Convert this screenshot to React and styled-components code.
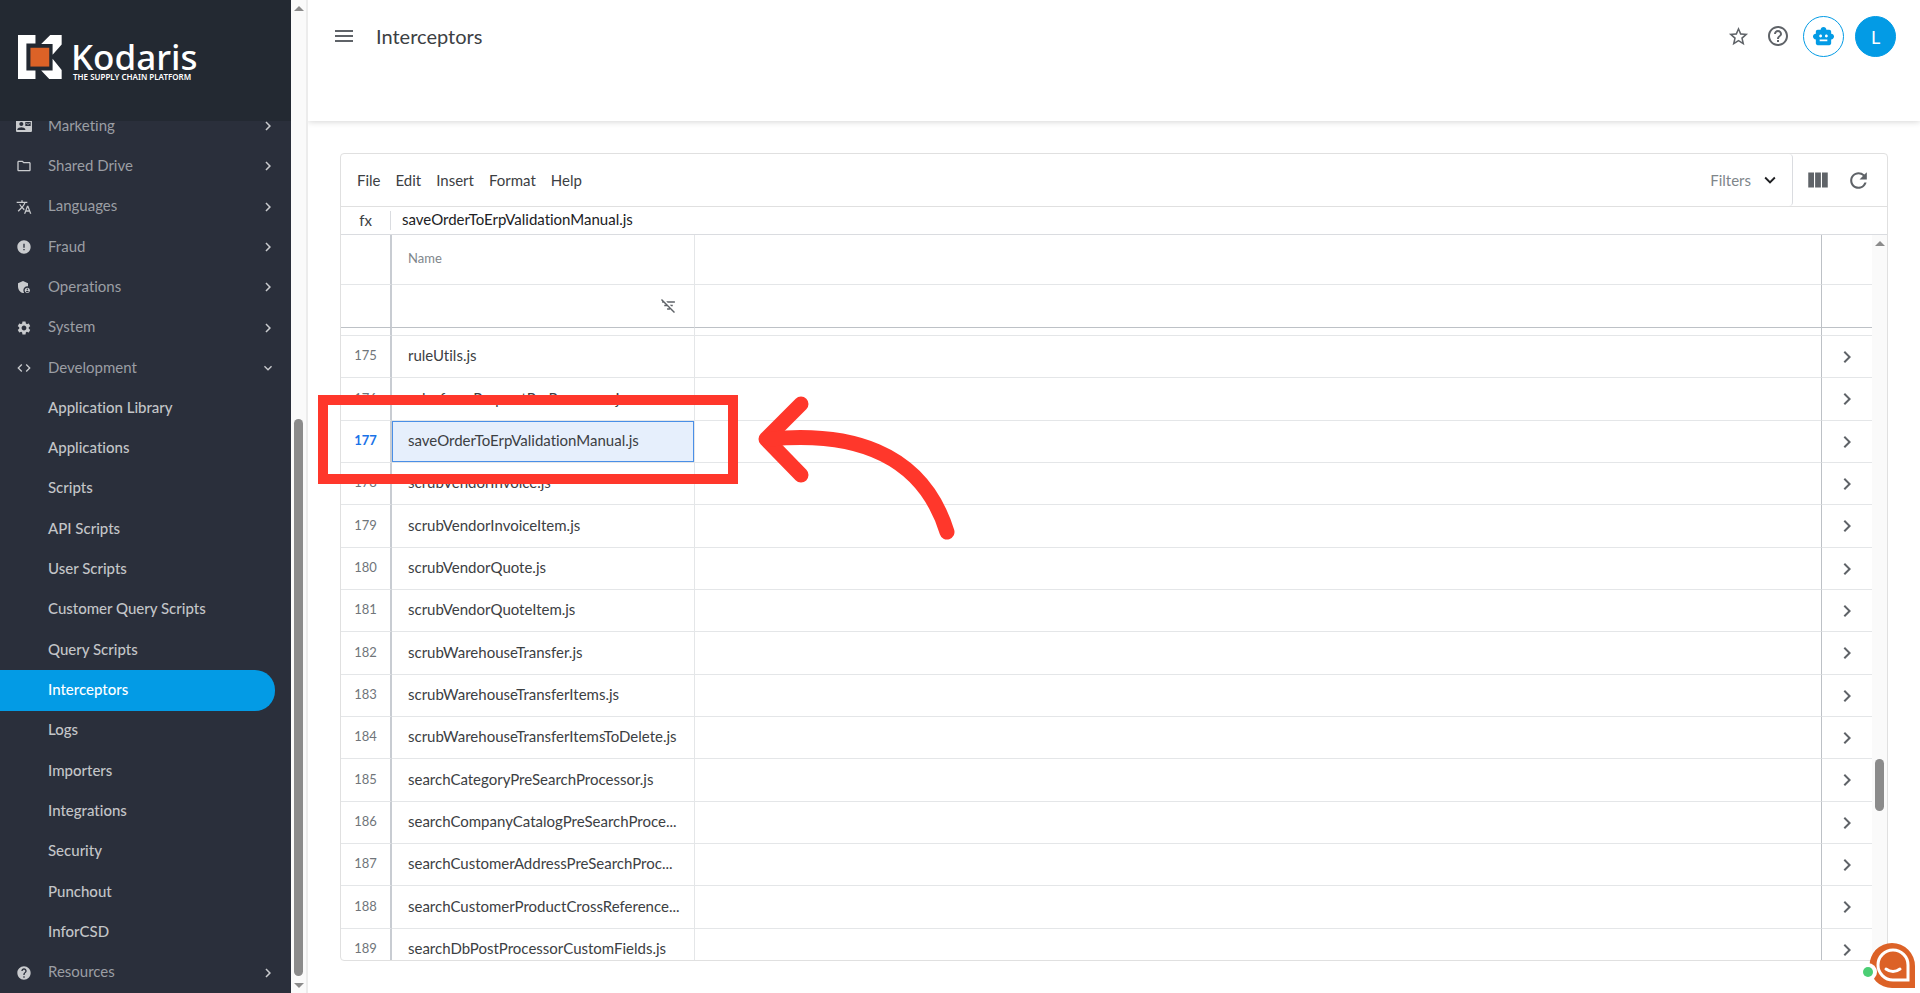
import React from "react";
import styled, { createGlobalStyle } from "styled-components";
import {
	MdAdminPanelSettings,
	MdCode,
	MdContactMail,
	MdError,
	MdExpandMore,
	MdChevronRight,
	MdFilterListOff,
	MdHelp,
	MdHelpOutline,
	MdMenu,
	MdOutlineFolder,
	MdRefresh,
	MdSettings,
	MdSmartToy,
	MdStarBorder,
	MdTranslate,
	MdViewColumn,
} from "react-icons/md";

const GlobalStyle = createGlobalStyle`
	* {
		box-sizing: border-box;
	}
	body {
		margin: 0;
		font-family: Lato, "Open Sans", sans-serif;
		font-size: 15px;
		font-variant-ligatures: none;
		color: #3c4043;
		background: #fff;
	}
	button, input {
		font: inherit;
		color: inherit;
		padding: 0;
		border: 0;
		background: none;
		font-variant-ligatures: none;
	}
	button {
		cursor: pointer;
	}
	a {
		text-decoration: none;
	}
`;

const Page = styled.div`
	display: flex;
	height: 100vh;
	overflow: hidden;
`;

/* sidebar */

const Sidebar = styled.aside`
	display: flex;
	flex-direction: column;
	flex: none;
	width: 291px;
	background: #2a2f3b;
`;

const Brand = styled.a`
	display: flex;
	flex: none;
	gap: 9px;
	height: 121px;
	padding: 35px 18px 0;
	background: #232932;
	color: #fff;
	font-family: "Noto Sans", sans-serif;
	z-index: 1;
`;

const BrandText = styled.div`
	padding-top: 6px;
`;

const BrandName = styled.div`
	font-size: 35px;
	line-height: 32px;
	font-weight: 500;
`;

const Tagline = styled.div`
	padding-left: 2px;
	font-size: 8px;
	line-height: 8px;
	font-weight: 600;
	white-space: nowrap;
`;

const NavList = styled.ul`
	display: flex;
	flex-direction: column;
	flex: 1;
	margin: -15px 0 0;
	padding: 0;
	list-style: none;
`;

const NavItem = styled.li`
	display: flex;
	flex: 1 0 40px;
`;

const Group = styled.button`
	display: grid;
	grid-template-columns: 48px 1fr 46px;
	align-items: center;
	width: 100%;
	text-align: left;
	color: #9b9ea4;

	span {
		padding-bottom: 3px;
	}
	svg {
		justify-self: center;
		color: #c9cbce;
	}
`;

const SubLink = styled.a`
	display: flex;
	align-items: center;
	width: 275px;
	padding: 0 0 3px 48px;
	border-radius: 0 20px 20px 0;
	font-weight: 500;
	color: ${({ $active }) => ($active ? "#fff" : "#c3c5c8")};
	background: ${({ $active }) => ($active ? "#039be5" : "transparent")};
`;

/* scrollbars */

const Track = styled.div`
	display: flex;
	flex-direction: column;
	align-items: center;
	flex: none;
	width: 15px;
	background: #fafafa;
`;

const Arrow = styled.div`
	flex: none;
	margin: 6px 0 5px;
	border: 5px solid transparent;
	border-top-width: ${({ $down }) => ($down ? "5px" : "0")};
	border-bottom-width: ${({ $down }) => ($down ? "0" : "5px")};
	border-top-color: #8b8b8b;
	border-bottom-color: #8b8b8b;
`;

const Gap = styled.div`
	flex: ${({ $size }) => $size};
`;

const Thumb = styled.div`
	flex: ${({ $size }) => $size};
	width: 9px;
	border-radius: 5px;
	background: #8b8b8b;
`;

/* main column */

const Main = styled.main`
	display: flex;
	flex-direction: column;
	flex: 1;
	min-width: 0;
	border-left: 2px solid #ececec;
`;

const Header = styled.header`
	display: flex;
	align-items: flex-start;
	flex: none;
	height: 121px;
	padding: 16px 24px 0 16px;
	box-shadow: 0 1px 6px rgba(0, 0, 0, 0.16);
	clip-path: inset(0 0 -10px 0);
`;

const IconButton = styled.button`
	display: flex;
	align-items: center;
	justify-content: center;
	width: 40px;
	height: 40px;
	color: #5f6368;
`;

const Title = styled.h1`
	flex: 1;
	margin: 0 0 0 12px;
	font-size: 20px;
	line-height: 40px;
	font-weight: 400;
`;

const Round = styled(IconButton)`
	width: 41px;
	height: 41px;
	margin-left: ${({ $filled }) => ($filled ? "11px" : "5px")};
	border: 1px solid #039be5;
	border-radius: 50%;
	font-size: 18px;
	color: ${({ $filled }) => ($filled ? "#fff" : "#039be5")};
	background: ${({ $filled }) => ($filled ? "#039be5" : "#fff")};
`;

const Content = styled.section`
	display: flex;
	flex: 1;
	min-height: 0;
	padding: 32px;
`;

const Sheet = styled.div`
	display: flex;
	flex-direction: column;
	flex: 1;
	min-width: 0;
	border: 1px solid #e0e0e0;
	border-radius: 4px;
	overflow: hidden;
`;

const Toolbar = styled.div`
	display: flex;
	flex: none;
	height: 53px;
	border-bottom: 1px solid #e0e0e0;
`;

const Menu = styled.nav`
	display: flex;
	align-items: center;
	flex: 1;
	gap: 15px;
	padding-left: 16px;
`;

const Filters = styled.button`
	display: flex;
	align-items: center;
	gap: 8px;
	padding: 0 11px;
	border-right: 1px solid #dadce0;
	border-radius: 4px;
	color: #80868b;

	svg {
		color: #202124;
	}
`;

const Tools = styled.div`
	display: flex;
	align-items: center;
	padding: 0 9px 0 5px;
`;

const FormulaBar = styled.label`
	display: flex;
	align-items: center;
	flex: none;
	height: 28px;
	border-bottom: 1px solid #dadce0;
`;

const Fx = styled.span`
	width: 50px;
	text-align: center;
	line-height: 19px;
	border-right: 1px solid #dadce0;
`;

const FormulaInput = styled.input`
	flex: 1;
	padding: 0 0 3px 11px;
	color: #202124;
`;

const GridArea = styled.div`
	display: flex;
	flex: 1;
	min-height: 0;
`;

const Viewport = styled.div`
	flex: 1;
	min-width: 0;
	overflow: hidden;
`;

const Table = styled.table`
	width: 100%;
	table-layout: fixed;
	border-spacing: 0;

	th, td {
		padding: 0;
		font-weight: 400;
		border-bottom: 1px solid #e4e6e8;
	}
	th:first-child {
		width: 51px;
		border-right: 2px solid #c8ccd2;
	}
	th:nth-child(2), td:nth-child(2) {
		width: 303px;
		border-right: 1px solid #e4e6e8;
	}
	th:nth-child(3), td:nth-child(3) {
		border-right: 1px solid #bdc1c6;
	}
	th:last-child, td:last-child {
		width: 50px;
	}
`;

const HeadRow = styled.tr`
	height: 50px;

	th {
		padding: 0 0 4px 16px;
		text-align: left;
		font-size: 13px;
		color: #80868b;
	}
`;

const FilterRow = styled.tr`
	height: 43px;

	&& th, && td {
		padding-bottom: 2px;
		border-bottom-color: #bdc1c6;
	}
`;

const FilterCell = styled.div`
	display: flex;
	align-items: center;
	padding: 0 17px 0 16px;

	input {
		flex: 1;
		min-width: 0;
	}
	button {
		display: flex;
		color: #5f6368;
	}
`;

const Spacer = styled.tr`
	height: 8px;
`;

const Row = styled.tr`
	height: 42px;

	&:nth-child(3n) {
		height: 43px;
	}
	th {
		padding-bottom: 3px;
		font-size: 13px;
		font-weight: ${({ $selected }) => ($selected ? 700 : 400)};
		color: ${({ $selected }) => ($selected ? "#1a73e8" : "#70757a")};
	}
`;

const NameCell = styled.td`
	&& {
		padding: 0 8px 3px 16px;
		background: ${({ $selected }) => ($selected ? "#e6effc" : "#fff")};
		box-shadow: ${({ $selected }) =>
			$selected ? "0 0 0 1px #4a8fe7 inset" : "none"};
		overflow: hidden;
		text-overflow: ellipsis;
		white-space: nowrap;
	}
`;

const OpenButton = styled.button`
	display: flex;
	width: 100%;
	justify-content: center;
	color: #5f6368;
`;

/* things floating over the page */

const Highlight = styled.div`
	position: absolute;
	left: 318px;
	top: 395px;
	width: 420px;
	height: 89px;
	border: 10px solid #ff372b;
	pointer-events: none;
`;

const Pointer = styled.svg`
	position: absolute;
	left: 750px;
	top: 385px;
	pointer-events: none;
`;

const ChatButton = styled.button`
	position: fixed;
	right: 5px;
	bottom: 4px;
	width: 56px;
	height: 47px;
`;

const groups = [
	{ label: "Marketing", icon: MdContactMail },
	{ label: "Shared Drive", icon: MdOutlineFolder },
	{ label: "Languages", icon: MdTranslate },
	{ label: "Fraud", icon: MdError },
	{ label: "Operations", icon: MdAdminPanelSettings },
	{ label: "System", icon: MdSettings },
	{
		label: "Development",
		icon: MdCode,
		children: [
			"Application Library",
			"Applications",
			"Scripts",
			"API Scripts",
			"User Scripts",
			"Customer Query Scripts",
			"Query Scripts",
			"Interceptors",
			"Logs",
			"Importers",
			"Integrations",
			"Security",
			"Punchout",
			"InforCSD",
		],
	},
	{ label: "Resources", icon: MdHelp },
];

const files = [
	"ruleUtils.js",
	"salesforceRequestPreProcessor.js",
	"saveOrderToErpValidationManual.js",
	"scrubVendorInvoice.js",
	"scrubVendorInvoiceItem.js",
	"scrubVendorQuote.js",
	"scrubVendorQuoteItem.js",
	"scrubWarehouseTransfer.js",
	"scrubWarehouseTransferItems.js",
	"scrubWarehouseTransferItemsToDelete.js",
	"searchCategoryPreSearchProcessor.js",
	"searchCompanyCatalogPreSearchProce...",
	"searchCustomerAddressPreSearchProc...",
	"searchCustomerProductCrossReference...",
	"searchDbPostProcessorCustomFields.js",
];
const firstRow = 175;
const selectedFile = "saveOrderToErpValidationManual.js";

const Logo = () => (
	<svg width='44' height='44' viewBox='0 0 131 131' fill='#fff'>
		<path d='M0 0H52V25H25V106H52V131H0Z' />
		<path d='M96 0H130V28L103 59V27H69Z' />
		<path d='M103 71L130 104V131H93L69 106H103Z' />
		<path d='M37 38H93V94H37Z' fill='#dc6227' />
	</svg>
);

const Scrollbar = ({ before, thumb, after }) => (
	<Track>
		<Arrow />
		<Gap $size={before} />
		<Thumb $size={thumb} />
		<Gap $size={after} />
		<Arrow $down />
	</Track>
);

const SideNav = () => (
	<Sidebar>
		<Brand href='#'>
			<Logo />
			<BrandText>
				<BrandName>Kodaris</BrandName>
				<Tagline>THE SUPPLY CHAIN PLATFORM</Tagline>
			</BrandText>
		</Brand>
		<NavList>
			{groups.map(({ label, icon: Icon, children = [] }) => (
				<React.Fragment key={label}>
					<NavItem>
						<Group>
							<Icon size={16} />
							<span>{label}</span>
							{children.length ? (
								<MdExpandMore size={16} />
							) : (
								<MdChevronRight size={18} />
							)}
						</Group>
					</NavItem>
					{children.map((child) => (
						<NavItem key={child}>
							<SubLink href='#' $active={child === "Interceptors"}>
								{child}
							</SubLink>
						</NavItem>
					))}
				</React.Fragment>
			))}
		</NavList>
	</Sidebar>
);

const FileTable = () => (
	<Table>
		<thead>
			<HeadRow>
				<th />
				<th>Name</th>
				<th />
				<th />
			</HeadRow>
			<FilterRow>
				<th />
				<td>
					<FilterCell>
						<input aria-label='Filter by name' />
						<button aria-label='Clear filter'>
							<MdFilterListOff size={17} />
						</button>
					</FilterCell>
				</td>
				<td />
				<td />
			</FilterRow>
		</thead>
		<tbody>
			<Spacer>
				<th />
				<td />
				<td />
				<td />
			</Spacer>
			{files.map((file, i) => {
				const selected = file === selectedFile;
				return (
					<Row key={file} $selected={selected}>
						<th>{firstRow + i}</th>
						<NameCell $selected={selected}>{file}</NameCell>
						<td />
						<td>
							<OpenButton aria-label={`Open ${file}`}>
								<MdChevronRight size={24} />
							</OpenButton>
						</td>
					</Row>
				);
			})}
		</tbody>
	</Table>
);

const App = () => (
	<>
		<GlobalStyle />
		<Page>
			<SideNav />
			<Scrollbar before={403} thumb={556} after={1} />
			<Main>
				<Header>
					<IconButton aria-label='Toggle menu'>
						<MdMenu size={24} />
					</IconButton>
					<Title>Interceptors</Title>
					<IconButton aria-label='Favorite'>
						<MdStarBorder size={23} />
					</IconButton>
					<IconButton aria-label='Help'>
						<MdHelpOutline size={24} />
					</IconButton>
					<Round aria-label='Assistant'>
						<MdSmartToy size={23} />
					</Round>
					<Round $filled>L</Round>
				</Header>
				<Content>
					<Sheet>
						<Toolbar>
							<Menu>
								<button>File</button>
								<button>Edit</button>
								<button>Insert</button>
								<button>Format</button>
								<button>Help</button>
							</Menu>
							<Filters>
								Filters <MdExpandMore size={22} />
							</Filters>
							<Tools>
								<IconButton aria-label='Columns'>
									<MdViewColumn size={26} />
								</IconButton>
								<IconButton aria-label='Refresh'>
									<MdRefresh size={25} />
								</IconButton>
							</Tools>
						</Toolbar>
						<FormulaBar>
							<Fx>fx</Fx>
							<FormulaInput defaultValue={selectedFile} />
						</FormulaBar>
						<GridArea>
							<Viewport>
								<FileTable />
							</Viewport>
							<Scrollbar before={507} thumb={51} after={133} />
						</GridArea>
					</Sheet>
				</Content>
			</Main>
		</Page>
		<Highlight />
		<Pointer
			width='220'
			height='165'
			fill='none'
			stroke='#ff372b'
			strokeWidth='15'
			strokeLinecap='round'
			strokeLinejoin='round'
		>
			<path d='M51 19L16 54L51 90' />
			<path d='M20 54C95 47 171 63 197 147' />
		</Pointer>
		<ChatButton aria-label='Open chat'>
			<svg width='56' height='47' fill='none'>
				<path
					d='M33 1A22 22 0 0 0 33 46H56V24A23 23 0 0 0 33 1Z'
					fill='#dc6227'
				/>
				<path
					d='M34 8A15 15 0 0 0 34 38H49V23A15 15 0 0 0 34 8Z'
					stroke='#fff'
					strokeWidth='3'
				/>
				<path
					d='M27 27Q34 32 41 27'
					stroke='#fff'
					strokeWidth='3'
					strokeLinecap='round'
				/>
				<circle cx='9' cy='30' r='9' fill='#fff' />
				<circle cx='9' cy='30' r='5' fill='#4bce74' />
			</svg>
		</ChatButton>
	</>
);

export default App;
